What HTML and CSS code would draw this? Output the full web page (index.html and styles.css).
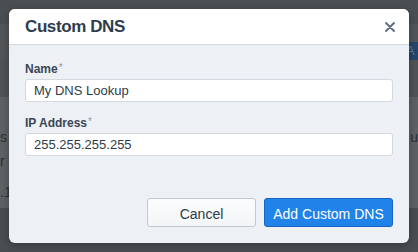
FILE: index.html
```html
<!DOCTYPE html>
<html lang="en">
<head>
  <meta charset="UTF-8">
  <title>Custom DNS</title>
  <link rel="stylesheet" href="styles.css">
</head>
<body>
<div class="page">
  <div class="topbar"></div>
  <div class="toolbar">
    <span class="tool-btn">A</span>
  </div>
  <div class="gap"></div>
  <div class="panel">
    <div class="panel-row"><span>s</span><span>u</span></div>
    <div class="panel-row"><span>r</span></div>
    <div class="panel-row last"><span>.1</span></div>
  </div>
</div>

<div class="modal">
  <div class="modal-head">
    <h2 class="modal-title">Custom DNS</h2>
    <button class="close-btn" aria-label="Close">
      <svg width="10" height="10" viewBox="0 0 10 10"><path d="M1 1L9 9M9 1L1 9" stroke="#5b6b7c" stroke-width="1.8" stroke-linecap="round"/></svg>
    </button>
  </div>
  <div class="modal-body">
    <label class="field-label">Name<span class="req">*</span></label>
    <input class="field-input" type="text" value="My DNS Lookup">
    <label class="field-label second">IP Address<span class="req">*</span></label>
    <input class="field-input" type="text" value="255.255.255.255">

    <div class="modal-foot">
      <button class="btn btn-cancel">Cancel</button>
      <button class="btn btn-primary">Add Custom DNS</button>
    </div>
  </div>
</div>
</body>
</html>
```

FILE: styles.css
```css
* {
  box-sizing: border-box;
}

body {
  margin: 0;
  width: 418px;
  height: 252px;
  overflow: hidden;
  background: #4a4e51;
  font-family: "Liberation Sans", Arial, sans-serif;
  position: relative;
}

/* dimmed page behind the dialog */
.page {
  height: 252px;
  display: flex;
  flex-direction: column;
}

.topbar {
  height: 24px;
  background: #4b4f52;
}

.toolbar {
  height: 36px;
  background: #525659;
  display: flex;
  justify-content: flex-end;
  align-items: flex-end;
}

.tool-btn {
  height: 18px;
  width: 14px;
  background: #26466b;
  color: #5b77a0;
  font-size: 13px;
  line-height: 18px;
  padding-left: 2px;
}

.gap {
  height: 37px;
  background: #505457;
}

.panel {
  height: 111px;
  background: #5e6265;
  padding-top: 32px;
  color: #2d3032;
  font-size: 14px;
}

.panel-row {
  height: 24px;
  display: flex;
  justify-content: space-between;
}

.panel-row.last {
  margin-top: 7px;
}

/* dialog */
.modal {
  position: absolute;
  left: 9px;
  top: 9px;
  width: 400px;
  height: 234px;
  border-radius: 6px;
  overflow: hidden;
  background: #edf1f5;
  display: flex;
  flex-direction: column;
  box-shadow: 0 2px 8px rgba(0,0,0,0.3);
}

.modal-head {
  height: 36px;
  background: #fff;
  border-bottom: 1px solid #d3d9df;
  display: flex;
  align-items: center;
  justify-content: space-between;
  padding: 0 14px 0 16px;
}

.modal-title {
  margin: 0;
  font-size: 17px;
  letter-spacing: -0.4px;
  font-weight: bold;
  color: #2e3c4d;
}

.close-btn {
  border: none;
  background: none;
  padding: 0;
  display: flex;
}

.modal-body {
  flex: 1;
  display: flex;
  flex-direction: column;
  padding: 15px 16px 16px;
}

.field-label {
  font-size: 12px;
  line-height: 15px;
  font-weight: bold;
  color: #3a4655;
  margin-bottom: 2px;
}

.field-label.second {
  margin-top: 12px;
}

.req {
  color: #8d97a3;
  font-weight: normal;
  font-size: 10px;
  vertical-align: 2px;
  margin-left: 1px;
}

.field-input {
  height: 23px;
  border: 1px solid #d3d9df;
  border-radius: 3px;
  background: #fff;
  padding: 0 8px;
  font-family: inherit;
  font-size: 13px;
  color: #2f3b48;
  outline: none;
}

.modal-foot {
  margin-top: auto;
  display: flex;
  justify-content: flex-end;
  gap: 8px;
}

.btn {
  height: 29px;
  border-radius: 3px;
  font-family: inherit;
  font-size: 14px;
  padding: 2px 8px 0;
}

.btn-cancel {
  width: 109px;
  background: linear-gradient(#fbfcfd, #f3f5f7);
  border: 1px solid #c3c9d0;
  color: #2f3b48;
}

.btn-primary {
  width: 129px;
  background: #1f83ea;
  border: 1px solid #1764c4;
  color: #fff;
}
```
